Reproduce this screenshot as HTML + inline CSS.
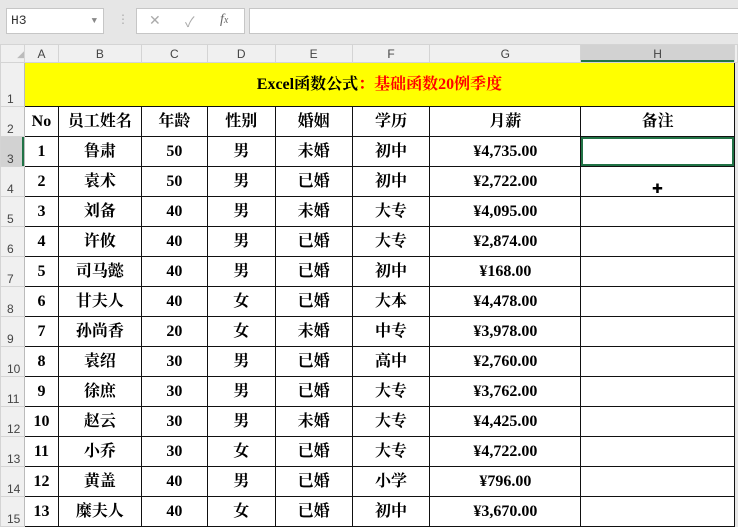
<!DOCTYPE html>
<html><head><meta charset="utf-8"><style>
body{margin:0;width:738px;height:510px;overflow:hidden;background:#e6e6e6;font-family:"Liberation Sans","Noto Sans CJK SC",sans-serif;position:relative}
.nb{position:absolute;left:6px;top:8px;width:98px;height:26px;background:#fff;border:1px solid #c6c6c6;box-sizing:border-box;font-size:13px;color:#333;line-height:24px;padding-left:4px;font-family:"Liberation Mono",monospace}
.fb{position:absolute;left:136px;top:8px;width:109px;height:26px;background:#fff;border:1px solid #c6c6c6;box-sizing:border-box;color:#aaa;font-size:14px}
.fi{position:absolute;left:249px;top:8px;width:495px;height:26px;background:#fff;border:1px solid #c6c6c6;box-sizing:border-box}
table{position:absolute;left:0;top:44px;border-collapse:collapse;table-layout:fixed;background:#fff}
td{padding:0;overflow:hidden;white-space:nowrap;text-align:center;font-family:"Liberation Serif","Noto Serif CJK SC",serif;font-weight:bold;font-size:16px;line-height:18px;border:1px solid #111;color:#000;vertical-align:middle}
tr.h td{background:#f0f0f0;border:1px solid #d4d4d4;font-family:"Liberation Sans",sans-serif;font-weight:normal;font-size:12px;line-height:14px;color:#444;height:17px}
td.r{background:#f0f0f0;border:1px solid #d4d4d4;border-right:1px solid #bbb;font-family:"Liberation Sans",sans-serif;font-weight:normal;font-size:12px;line-height:14px;color:#444;vertical-align:bottom;text-align:left;padding-left:6px}
tr.d td{height:29px}
td.x{border:none;background:#e6e6e6}
</style></head><body>
<div class="nb">H3<span style="position:absolute;right:6px;top:0;color:#888;font-size:9px">▼</span></div>
<div style="position:absolute;left:117px;top:12px;color:#aaa;font-size:12px">⋮</div>
<div class="fb"><span style="position:absolute;left:12px;top:3px">✕</span><span style="position:absolute;left:48px;top:3px">✓</span><span style="position:absolute;left:83px;top:3px;color:#666;font-style:italic;font-family:'Liberation Serif',serif">f<span style="font-size:10px">x</span></span></div>
<div class="fi"></div>
<table>
<colgroup><col style="width:24px"><col style="width:34px"><col style="width:83px"><col style="width:66px"><col style="width:68px"><col style="width:77px"><col style="width:78px"><col style="width:151px"><col style="width:154px"><col style="width:3px"></colgroup>
<tr class="h"><td style="color:#bbb;font-size:9px;text-align:right">◢</td><td>A</td><td>B</td><td>C</td><td>D</td><td>E</td><td>F</td><td>G</td><td style="background:#d2d2d2;box-shadow:inset 0 -2px 0 #217346">H</td><td class="x"></td></tr>
<tr><td class="r" style="height:43px">1</td><td colspan="8" style="background:#ff0;font-size:16px">Excel函数公式<span style="color:#f00">：基础函数20例季度</span></td><td class="x"></td></tr>
<tr class="d"><td class="r">2</td><td>No</td><td>员工姓名</td><td>年龄</td><td>性别</td><td>婚姻</td><td>学历</td><td>月薪</td><td>备注</td><td class="x"></td></tr>
<tr class="d"><td class="r" style="background:#d2d2d2;box-shadow:inset -2px 0 0 #217346">3</td><td>1</td><td>鲁肃</td><td>50</td><td>男</td><td>未婚</td><td>初中</td><td>¥4,735.00</td><td style="box-shadow:inset 0 0 0 2px #217346"></td><td class="x"></td></tr>
<tr class="d"><td class="r">4</td><td>2</td><td>袁术</td><td>50</td><td>男</td><td>已婚</td><td>初中</td><td>¥2,722.00</td><td style="vertical-align:bottom;font-size:13px;line-height:13px;font-family:'DejaVu Sans'">✚</td><td class="x"></td></tr>
<tr class="d"><td class="r">5</td><td>3</td><td>刘备</td><td>40</td><td>男</td><td>未婚</td><td>大专</td><td>¥4,095.00</td><td></td><td class="x"></td></tr>
<tr class="d"><td class="r">6</td><td>4</td><td>许攸</td><td>40</td><td>男</td><td>已婚</td><td>大专</td><td>¥2,874.00</td><td></td><td class="x"></td></tr>
<tr class="d"><td class="r">7</td><td>5</td><td>司马懿</td><td>40</td><td>男</td><td>已婚</td><td>初中</td><td>¥168.00</td><td></td><td class="x"></td></tr>
<tr class="d"><td class="r">8</td><td>6</td><td>甘夫人</td><td>40</td><td>女</td><td>已婚</td><td>大本</td><td>¥4,478.00</td><td></td><td class="x"></td></tr>
<tr class="d"><td class="r">9</td><td>7</td><td>孙尚香</td><td>20</td><td>女</td><td>未婚</td><td>中专</td><td>¥3,978.00</td><td></td><td class="x"></td></tr>
<tr class="d"><td class="r">10</td><td>8</td><td>袁绍</td><td>30</td><td>男</td><td>已婚</td><td>高中</td><td>¥2,760.00</td><td></td><td class="x"></td></tr>
<tr class="d"><td class="r">11</td><td>9</td><td>徐庶</td><td>30</td><td>男</td><td>已婚</td><td>大专</td><td>¥3,762.00</td><td></td><td class="x"></td></tr>
<tr class="d"><td class="r">12</td><td>10</td><td>赵云</td><td>30</td><td>男</td><td>未婚</td><td>大专</td><td>¥4,425.00</td><td></td><td class="x"></td></tr>
<tr class="d"><td class="r">13</td><td>11</td><td>小乔</td><td>30</td><td>女</td><td>已婚</td><td>大专</td><td>¥4,722.00</td><td></td><td class="x"></td></tr>
<tr class="d"><td class="r">14</td><td>12</td><td>黄盖</td><td>40</td><td>男</td><td>已婚</td><td>小学</td><td>¥796.00</td><td></td><td class="x"></td></tr>
<tr class="d"><td class="r">15</td><td>13</td><td>糜夫人</td><td>40</td><td>女</td><td>已婚</td><td>初中</td><td>¥3,670.00</td><td></td><td class="x"></td></tr>
</table>
</body></html>
